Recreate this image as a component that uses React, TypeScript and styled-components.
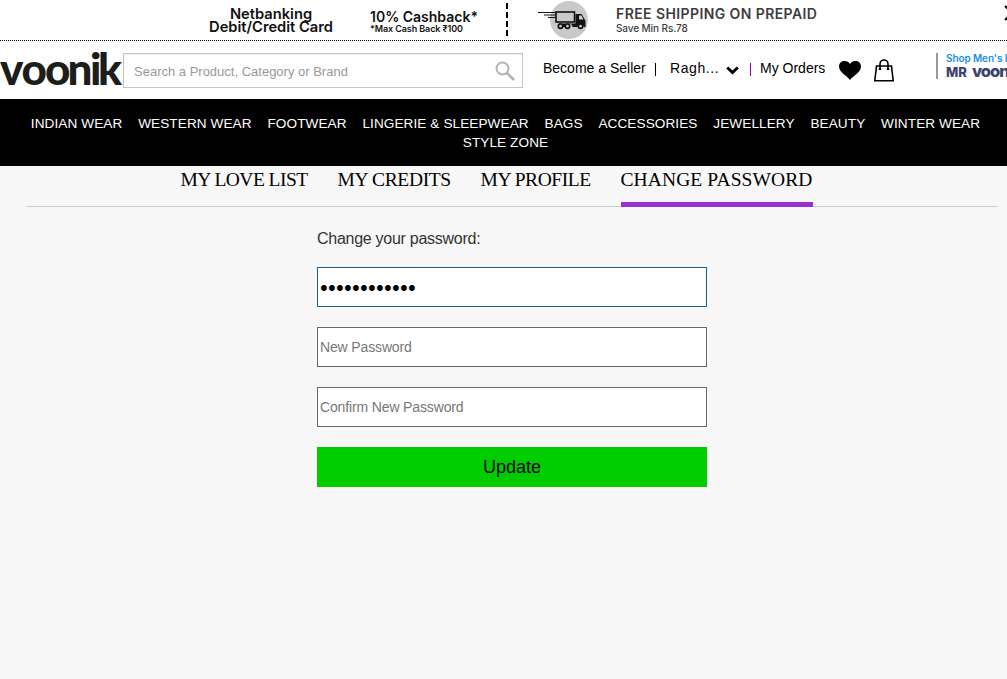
import React from "react";
import styled, { createGlobalStyle } from "styled-components";

const sans = `"Liberation Sans", Arial, sans-serif`;
const promo = `Inter, "Open Sans", sans-serif`;

const GlobalStyle = createGlobalStyle`
  * { box-sizing: border-box; }
  body { margin: 0; background: #f7f7f7; font-family: ${sans}; color: #000; }
`;

const Page = styled.div`
  width: 100%;
  min-width: 1007px;
  min-height: 679px;
  overflow: hidden;
`;

const Banner = styled.div`
  display: flex;
  height: 41px;
  overflow: hidden;
  background: #fff;
  border-bottom: 1px dotted #000;
  font-family: ${promo};
  color: #111;
  white-space: nowrap;
`;

const BankOffer = styled.div`
  flex: none;
  width: 124px;
  margin: 8px 0 0 209px;
  text-align: center;
  font-size: 14.7px;
  font-weight: 600;
  line-height: 13px;
`;

const Cashback = styled.div`
  flex: none;
  width: 136px;
  margin: 10px 0 0 37px;
`;

const PromoTitle = styled.div<{ $tracking?: number }>`
  font-size: 14px;
  font-weight: 600;
  line-height: 14px;
  letter-spacing: ${(p) => p.$tracking ?? 0}px;
`;

const PromoNote = styled.div<{ $size: number; $weight: number; $gap?: number }>`
  margin-top: ${(p) => p.$gap ?? 0}px;
  font-size: ${(p) => p.$size}px;
  font-weight: ${(p) => p.$weight};
  line-height: 10px;
  letter-spacing: -0.1px;
`;

const Divider = styled.div`
  flex: none;
  width: 2px;
  height: 33px;
  margin-top: 3px;
  border-left: 2px dashed #000;
`;

const TruckIcon = styled.svg`
  flex: none;
  width: 50px;
  height: 40px;
  margin-left: 30px;
`;

const Shipping = styled.div`
  flex: none;
  width: 386px;
  margin: 7px 0 0 28px;
  color: #3d3d3d;
`;

const CloseIcon = styled.svg`
  flex: none;
  width: 16px;
  height: 16px;
  margin: 5px 0 0 2px;
`;

const Header = styled.header`
  display: flex;
  align-items: flex-start;
  height: 58px;
  background: #fff;
  overflow: hidden;
  white-space: nowrap;
`;

const Logo = styled.svg`
  flex: none;
  width: 123px;
  height: 50px;
`;

const SearchBox = styled.div`
  display: flex;
  flex: none;
  align-items: center;
  width: 400px;
  height: 35px;
  margin-top: 12px;
  padding: 0 7px 0 10px;
  border: 1px solid #c4c4c4;
  box-shadow: inset 0 1px 1px #eee;
`;

const SearchInput = styled.input`
  flex: 1;
  padding: 2px 0 0;
  border: 0;
  outline: 0;
  background: transparent;
  font: 13px ${sans};
  &::placeholder { color: #999; opacity: 1; }
`;

const AccountLink = styled.a<{ $width: number; $tracking?: number }>`
  flex: none;
  width: ${(p) => p.$width}px;
  padding-top: 19px;
  font-size: 14px;
  line-height: 16px;
  letter-spacing: ${(p) => p.$tracking ?? 0}px;
`;

const Account = styled.nav`
  display: flex;
  margin-left: 20px;
`;

const Bar = styled.span<{ $color: string; $gap: number }>`
  width: 1px;
  height: 13px;
  margin: 22px ${(p) => p.$gap}px 0 0;
  background: ${(p) => p.$color};
`;

const ChevronIcon = styled.svg`
  flex: none;
  width: 13px;
  height: 9px;
  margin: 25px 11px 0 0;
`;

const HeartIcon = styled.svg`
  flex: none;
  width: 22px;
  height: 19px;
  margin: 20px 13px 0 12px;
`;

const BagIcon = styled.svg`
  flex: none;
  width: 20px;
  height: 23px;
  margin-top: 18px;
`;

const MenShop = styled.div`
  flex: none;
  height: 26px;
  margin: 12px 0 0 42px;
  padding-left: 8px;
  border-left: 2px solid #999;
  font-family: ${promo};
`;

const MenShopTitle = styled.div`
  color: #1b8fe3;
  font-size: 10px;
  font-weight: 600;
  line-height: 11px;
  letter-spacing: -0.1px;
`;

const MenShopBrand = styled.div`
  color: #3a426f;
  font-size: 13px;
  font-weight: 800;
  line-height: 15px;
`;

const BrandWord = styled.span`
  margin-left: 5px;
  font-size: 16.5px;
  letter-spacing: -1px;
`;

const CategoryBar = styled.nav`
  display: flex;
  flex-wrap: wrap;
  justify-content: center;
  align-content: flex-start;
  height: 67px;
  padding: 15px 20px 0 24px;
  column-gap: 15.8px;
  background: #000;
`;

const Category = styled.a`
  color: #fff;
  font-size: 13.6px;
  line-height: 19px;
  letter-spacing: 0.08px;
  white-space: nowrap;
`;

const Tabs = styled.div`
  display: flex;
  gap: 29.5px;
  height: 41px;
  margin: 0 9px 0 26px;
  padding-left: 154.5px;
  border-bottom: 1px solid #ccc;
`;

const Tab = styled.a<{ $width: number; $tracking: number; $active?: boolean }>`
  width: ${(p) => p.$width}px;
  height: 41px;
  padding-top: 3px;
  border-bottom: ${(p) => (p.$active ? "5px solid #9932cc" : "0")};
  font-family: "Liberation Serif", serif;
  font-size: 19.5px;
  line-height: 22px;
  letter-spacing: ${(p) => p.$tracking}px;
  white-space: nowrap;
`;

const Form = styled.form`
  display: flex;
  flex-direction: column;
  gap: 20px;
  width: 390px;
  margin: 22px 0 0 317px;
`;

const FormTitle = styled.label`
  height: 18px;
  color: #333;
  font-size: 16px;
  line-height: 20px;
  letter-spacing: -0.27px;
`;

const Field = styled.input<{ $active?: boolean }>`
  width: 100%;
  height: 40px;
  padding: ${(p) => (p.$active ? "3px 2px 1px" : "1px 2px")};
  border: 1px solid ${(p) => (p.$active ? "#1f5f8f" : "#666")};
  border-radius: 0;
  outline: 0;
  background: #fff;
  font-family: ${sans};
  font-size: ${(p) => (p.$active ? 22 : 14)}px;
  letter-spacing: ${(p) => (p.$active ? 0.3 : -0.14)}px;
  color: #000;
  &::placeholder { color: #777; opacity: 1; }
`;

const UpdateButton = styled.button`
  height: 40px;
  padding: 0;
  border: 0;
  background: #00cd00;
  color: #000;
  font: 18px ${sans};
`;

const categories = [
  "INDIAN WEAR", "WESTERN WEAR", "FOOTWEAR", "LINGERIE & SLEEPWEAR", "BAGS",
  "ACCESSORIES", "JEWELLERY", "BEAUTY", "WINTER WEAR", "STYLE ZONE",
];

const tabs = [
  { label: "MY LOVE LIST", width: 127.5, tracking: -0.54 },
  { label: "MY CREDITS", width: 113.5, tracking: -0.35 },
  { label: "MY PROFILE", width: 110.5, tracking: -0.45 },
  { label: "CHANGE PASSWORD", width: 192, tracking: 0.1, active: true },
];

export default function App() {
  return (
    <Page>
      <GlobalStyle />
      <Banner>
        <BankOffer>Netbanking<br />Debit/Credit Card</BankOffer>
        <Cashback>
          <PromoTitle>10% Cashback*</PromoTitle>
          <PromoNote $size={9} $weight={600}>*Max Cash Back ₹100</PromoNote>
        </Cashback>
        <Divider />
        <TruckIcon viewBox="0 0 50 40">
          <circle cx="31" cy="20" r="19" fill="#c9c9c9" />
          <path d="M0 12.5h18M6 15h12M10 17.5h8" stroke="#111" strokeWidth="1.1" />
          <rect x="18" y="12" width="18.5" height="10" fill="#c9c9c9" stroke="#111" strokeWidth="1.6" />
          <path d="M37.5 14h6l3 5 1 2v6h-2a3 3 0 0 0-6 0h-5a3 3 0 0 0-6 0h-8v-3.500h17z" fill="#111" />
          <path d="M41 15.5h2.5l2 4H41z" fill="#c9c9c9" />
          <g fill="#c9c9c9" stroke="#111" strokeWidth="1.7">
            <circle cx="22.5" cy="26.2" r="2.2" />
            <circle cx="29.5" cy="26.2" r="2.2" />
            <circle cx="42.5" cy="26.2" r="2.2" />
          </g>
        </TruckIcon>
        <Shipping>
          <PromoTitle $tracking={0.41}>FREE SHIPPING ON PREPAID</PromoTitle>
          <PromoNote $size={10} $weight={500} $gap={2}>Save Min Rs.78</PromoNote>
        </Shipping>
        <CloseIcon viewBox="0 0 16 16">
          <path d="M1 1l14 14M15 1L1 15" stroke="#000" strokeWidth="2" />
        </CloseIcon>
      </Banner>

      <Header>
        <Logo viewBox="0 0 123 50">
          <text x="0 21.500 45 67.500 90 98" y="43.5" fontFamily="Lato" fontSize="44" fontWeight="900" fill="#1d1d1b">voonik</text>
        </Logo>
        <SearchBox>
          <SearchInput placeholder="Search a Product, Category or Brand" />
          <svg width="20" height="20" viewBox="0 0 20 20" fill="none" stroke="#b3b3b3">
            <circle cx="7.5" cy="7.5" r="6" strokeWidth="2" />
            <path d="M12 12l7 7" strokeWidth="2.6" />
          </svg>
        </SearchBox>
        <Account>
          <AccountLink $width={112}>Become a Seller</AccountLink>
          <Bar $color="#000" $gap={14} />
          <AccountLink $width={56} $tracking={0.6}>Ragh...</AccountLink>
          <ChevronIcon viewBox="0 0 13 9">
            <path d="M1.2 1.5l5.3 5 5.3-5" fill="none" stroke="#000" strokeWidth="3" />
          </ChevronIcon>
          <Bar $color="#909" $gap={9} />
          <AccountLink $width={67}>My Orders</AccountLink>
        </Account>
        <HeartIcon viewBox="0 0 22 19">
          <path d="M11 19C9 15.5 0 11.500 0 5.500C0 2 2.500 0 5.500 0C8 0 10 1 11 3C12 1 14 0 16.500 0C19.500 0 22 2 22 5.500C22 11.500 13 15.500 11 19z" />
        </HeartIcon>
        <BagIcon viewBox="0 0 20 23" fill="none" stroke="#000" strokeWidth="1.6">
          <path d="M2.500 7h15l1.700 14.800H.8z" />
          <path d="M6 10.500V5a4 4 0 0 1 8 0v5.500" />
          <path d="M4.800 10h2.400M12.800 10h2.400" strokeWidth="2" />
        </BagIcon>
        <MenShop>
          <MenShopTitle>Shop Men's Fashion</MenShopTitle>
          <MenShopBrand>MR<BrandWord>voonik</BrandWord></MenShopBrand>
        </MenShop>
      </Header>

      <CategoryBar>
        {categories.map((name) => <Category key={name}>{name}</Category>)}
      </CategoryBar>

      <Tabs>
        {tabs.map((tab) => (
          <Tab key={tab.label} $width={tab.width} $tracking={tab.tracking} $active={tab.active}>{tab.label}</Tab>
        ))}
      </Tabs>

      <Form>
        <FormTitle>Change your password:</FormTitle>
        <Field type="password" defaultValue="abcdefghijkl" $active />
        <Field type="password" placeholder="New Password" />
        <Field type="password" placeholder="Confirm New Password" />
        <UpdateButton type="button">Update</UpdateButton>
      </Form>
    </Page>
  );
}
